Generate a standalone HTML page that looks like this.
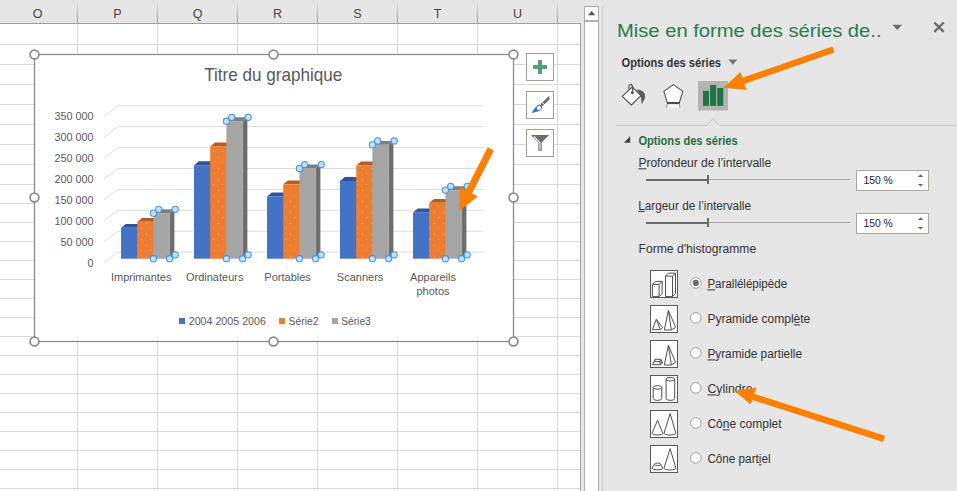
<!DOCTYPE html>
<html><head><meta charset="utf-8"><style>
html,body{margin:0;padding:0;width:957px;height:491px;overflow:hidden;background:#e6e6e6;}
svg{display:block;}
text{font-family:"Liberation Sans",sans-serif;}
</style></head><body>
<svg width="957" height="491" viewBox="0 0 957 491">
<defs>
<linearGradient id="hsep" x1="0" y1="0" x2="0" y2="1"><stop offset="0" stop-color="#d0d0d0"/><stop offset="1" stop-color="#9a9a9a"/></linearGradient>
<pattern id="dots" width="9" height="11" patternUnits="userSpaceOnUse"><rect x="2" y="3" width="1" height="1" fill="#f5a56a"/><rect x="6" y="8" width="1" height="1" fill="#f5a56a"/></pattern>
</defs>
<rect x="0" y="0" width="957" height="491" fill="#e6e6e6" />
<rect x="0" y="0" width="581" height="23" fill="#e6e6e6" />
<rect x="0" y="24" width="580" height="467" fill="#ffffff" />
<rect x="77" y="24" width="1" height="467" fill="#d9d9d9" />
<rect x="77" y="4" width="1" height="19" fill="url(#hsep)"/>
<rect x="157" y="24" width="1" height="467" fill="#d9d9d9" />
<rect x="157" y="4" width="1" height="19" fill="url(#hsep)"/>
<rect x="237" y="24" width="1" height="467" fill="#d9d9d9" />
<rect x="237" y="4" width="1" height="19" fill="url(#hsep)"/>
<rect x="317" y="24" width="1" height="467" fill="#d9d9d9" />
<rect x="317" y="4" width="1" height="19" fill="url(#hsep)"/>
<rect x="397" y="24" width="1" height="467" fill="#d9d9d9" />
<rect x="397" y="4" width="1" height="19" fill="url(#hsep)"/>
<rect x="477" y="24" width="1" height="467" fill="#d9d9d9" />
<rect x="477" y="4" width="1" height="19" fill="url(#hsep)"/>
<rect x="557" y="24" width="1" height="467" fill="#d9d9d9" />
<rect x="557" y="4" width="1" height="19" fill="url(#hsep)"/>
<rect x="0" y="44" width="580" height="1" fill="#d9d9d9" />
<rect x="0" y="64" width="580" height="1" fill="#d9d9d9" />
<rect x="0" y="84" width="580" height="1" fill="#d9d9d9" />
<rect x="0" y="104" width="580" height="1" fill="#d9d9d9" />
<rect x="0" y="124" width="580" height="1" fill="#d9d9d9" />
<rect x="0" y="144" width="580" height="1" fill="#d9d9d9" />
<rect x="0" y="164" width="580" height="1" fill="#d9d9d9" />
<rect x="0" y="184" width="580" height="1" fill="#d9d9d9" />
<rect x="0" y="203" width="580" height="1" fill="#d9d9d9" />
<rect x="0" y="222" width="580" height="1" fill="#d9d9d9" />
<rect x="0" y="241" width="580" height="1" fill="#d9d9d9" />
<rect x="0" y="260" width="580" height="1" fill="#d9d9d9" />
<rect x="0" y="279" width="580" height="1" fill="#d9d9d9" />
<rect x="0" y="298" width="580" height="1" fill="#d9d9d9" />
<rect x="0" y="317" width="580" height="1" fill="#d9d9d9" />
<rect x="0" y="336" width="580" height="1" fill="#d9d9d9" />
<rect x="0" y="355" width="580" height="1" fill="#d9d9d9" />
<rect x="0" y="374" width="580" height="1" fill="#d9d9d9" />
<rect x="0" y="393" width="580" height="1" fill="#d9d9d9" />
<rect x="0" y="412" width="580" height="1" fill="#d9d9d9" />
<rect x="0" y="431" width="580" height="1" fill="#d9d9d9" />
<rect x="0" y="450" width="580" height="1" fill="#d9d9d9" />
<rect x="0" y="469" width="580" height="1" fill="#d9d9d9" />
<rect x="0" y="488" width="580" height="1" fill="#d9d9d9" />
<rect x="0" y="23" width="581" height="1" fill="#a0a0a0" />
<rect x="580" y="23" width="1" height="468" fill="#a6a6a6" />
<text x="37.5" y="18" font-size="12.5" fill="#444444" text-anchor="middle" font-weight="normal" >O</text>
<text x="117.5" y="18" font-size="12.5" fill="#444444" text-anchor="middle" font-weight="normal" >P</text>
<text x="197.5" y="18" font-size="12.5" fill="#444444" text-anchor="middle" font-weight="normal" >Q</text>
<text x="277.5" y="18" font-size="12.5" fill="#444444" text-anchor="middle" font-weight="normal" >R</text>
<text x="357.5" y="18" font-size="12.5" fill="#444444" text-anchor="middle" font-weight="normal" >S</text>
<text x="437.5" y="18" font-size="12.5" fill="#444444" text-anchor="middle" font-weight="normal" >T</text>
<text x="517.5" y="18" font-size="12.5" fill="#444444" text-anchor="middle" font-weight="normal" >U</text>
<rect x="584" y="6" width="15" height="485" fill="#ababab" />
<rect x="585" y="7" width="13" height="484" fill="#ffffff" />
<rect x="585" y="20" width="13" height="2" fill="#b0b0b0" />
<polygon points="588.00,15.20 595.20,15.20 591.60,11.00" fill="#555555" />
<rect x="602" y="6" width="1" height="485" fill="#cfcfcf" />
<rect x="34.5" y="54.5" width="479" height="287" fill="#ffffff" stroke="#8c8c8c" stroke-width="1.3"/>
<text x="204.2" y="81" font-size="17.8" fill="#595959" text-anchor="start" font-weight="normal" textLength="138" lengthAdjust="spacingAndGlyphs" >Titre du graphique</text>
<path d="M104,116.40 L118,105.80 L483.5,105.80" fill="none" stroke="#dcdcdc" stroke-width="1"/>
<text x="93.5" y="120.2" font-size="10.8" fill="#595959" text-anchor="end" font-weight="normal" >350 000</text>
<path d="M104,137.30 L118,126.70 L483.5,126.70" fill="none" stroke="#dcdcdc" stroke-width="1"/>
<text x="93.5" y="141.1" font-size="10.8" fill="#595959" text-anchor="end" font-weight="normal" >300 000</text>
<path d="M104,158.20 L118,147.60 L483.5,147.60" fill="none" stroke="#dcdcdc" stroke-width="1"/>
<text x="93.5" y="162.0" font-size="10.8" fill="#595959" text-anchor="end" font-weight="normal" >250 000</text>
<path d="M104,179.10 L118,168.50 L483.5,168.50" fill="none" stroke="#dcdcdc" stroke-width="1"/>
<text x="93.5" y="182.9" font-size="10.8" fill="#595959" text-anchor="end" font-weight="normal" >200 000</text>
<path d="M104,200.00 L118,189.40 L483.5,189.40" fill="none" stroke="#dcdcdc" stroke-width="1"/>
<text x="93.5" y="203.79999999999998" font-size="10.8" fill="#595959" text-anchor="end" font-weight="normal" >150 000</text>
<path d="M104,220.90 L118,210.30 L483.5,210.30" fill="none" stroke="#dcdcdc" stroke-width="1"/>
<text x="93.5" y="224.70000000000002" font-size="10.8" fill="#595959" text-anchor="end" font-weight="normal" >100 000</text>
<path d="M104,241.80 L118,231.20 L483.5,231.20" fill="none" stroke="#dcdcdc" stroke-width="1"/>
<text x="93.5" y="245.6" font-size="10.8" fill="#595959" text-anchor="end" font-weight="normal" >50 000</text>
<path d="M104,262.70 L118,252.10 L483.5,252.10" fill="none" stroke="#dcdcdc" stroke-width="1"/>
<text x="93.5" y="266.49999999999994" font-size="10.8" fill="#595959" text-anchor="end" font-weight="normal" >0</text>
<polygon points="121.00,227.80 125.80,223.90 142.00,223.90 137.20,227.80" fill="#2f5597" />
<polygon points="137.20,227.80 142.00,223.90 142.00,254.80 137.20,258.70" fill="#2f5597" />
<rect x="121.00" y="227.80" width="16.20" height="30.90" fill="#4472c4" />
<polygon points="137.20,221.80 142.00,217.90 158.20,217.90 153.40,221.80" fill="#b85d1f" />
<polygon points="153.40,221.80 158.20,217.90 158.20,254.80 153.40,258.70" fill="#ae5a23" />
<rect x="137.20" y="221.80" width="16.20" height="36.90" fill="#ed7d31" />
<rect x="137.20" y="221.80" width="16.20" height="36.90" fill="url(#dots)"/>
<polygon points="153.40,213.20 158.20,209.30 174.40,209.30 169.60,213.20" fill="#7f7f7f" />
<polygon points="169.60,213.20 174.40,209.30 174.40,254.80 169.60,258.70" fill="#6e6e6e" />
<rect x="153.40" y="213.20" width="16.20" height="45.50" fill="#a5a5a5" />
<polygon points="194.00,165.20 198.80,161.30 215.00,161.30 210.20,165.20" fill="#2f5597" />
<polygon points="210.20,165.20 215.00,161.30 215.00,254.80 210.20,258.70" fill="#2f5597" />
<rect x="194.00" y="165.20" width="16.20" height="93.50" fill="#4472c4" />
<polygon points="210.20,146.40 215.00,142.50 231.20,142.50 226.40,146.40" fill="#b85d1f" />
<polygon points="226.40,146.40 231.20,142.50 231.20,254.80 226.40,258.70" fill="#ae5a23" />
<rect x="210.20" y="146.40" width="16.20" height="112.30" fill="#ed7d31" />
<rect x="210.20" y="146.40" width="16.20" height="112.30" fill="url(#dots)"/>
<polygon points="226.40,121.20 231.20,117.30 247.40,117.30 242.60,121.20" fill="#7f7f7f" />
<polygon points="242.60,121.20 247.40,117.30 247.40,254.80 242.60,258.70" fill="#6e6e6e" />
<rect x="226.40" y="121.20" width="16.20" height="137.50" fill="#a5a5a5" />
<polygon points="267.00,196.50 271.80,192.60 288.00,192.60 283.20,196.50" fill="#2f5597" />
<polygon points="283.20,196.50 288.00,192.60 288.00,254.80 283.20,258.70" fill="#2f5597" />
<rect x="267.00" y="196.50" width="16.20" height="62.20" fill="#4472c4" />
<polygon points="283.20,184.30 288.00,180.40 304.20,180.40 299.40,184.30" fill="#b85d1f" />
<polygon points="299.40,184.30 304.20,180.40 304.20,254.80 299.40,258.70" fill="#ae5a23" />
<rect x="283.20" y="184.30" width="16.20" height="74.40" fill="#ed7d31" />
<rect x="283.20" y="184.30" width="16.20" height="74.40" fill="url(#dots)"/>
<polygon points="299.40,168.40 304.20,164.50 320.40,164.50 315.60,168.40" fill="#7f7f7f" />
<polygon points="315.60,168.40 320.40,164.50 320.40,254.80 315.60,258.70" fill="#6e6e6e" />
<rect x="299.40" y="168.40" width="16.20" height="90.30" fill="#a5a5a5" />
<polygon points="340.00,181.00 344.80,177.10 361.00,177.10 356.20,181.00" fill="#2f5597" />
<polygon points="356.20,181.00 361.00,177.10 361.00,254.80 356.20,258.70" fill="#2f5597" />
<rect x="340.00" y="181.00" width="16.20" height="77.70" fill="#4472c4" />
<polygon points="356.20,165.50 361.00,161.60 377.20,161.60 372.40,165.50" fill="#b85d1f" />
<polygon points="372.40,165.50 377.20,161.60 377.20,254.80 372.40,258.70" fill="#ae5a23" />
<rect x="356.20" y="165.50" width="16.20" height="93.20" fill="#ed7d31" />
<rect x="356.20" y="165.50" width="16.20" height="93.20" fill="url(#dots)"/>
<polygon points="372.40,144.80 377.20,140.90 393.40,140.90 388.60,144.80" fill="#7f7f7f" />
<polygon points="388.60,144.80 393.40,140.90 393.40,254.80 388.60,258.70" fill="#6e6e6e" />
<rect x="372.40" y="144.80" width="16.20" height="113.90" fill="#a5a5a5" />
<polygon points="413.00,212.40 417.80,208.50 434.00,208.50 429.20,212.40" fill="#2f5597" />
<polygon points="429.20,212.40 434.00,208.50 434.00,254.80 429.20,258.70" fill="#2f5597" />
<rect x="413.00" y="212.40" width="16.20" height="46.30" fill="#4472c4" />
<polygon points="429.20,202.80 434.00,198.90 450.20,198.90 445.40,202.80" fill="#b85d1f" />
<polygon points="445.40,202.80 450.20,198.90 450.20,254.80 445.40,258.70" fill="#ae5a23" />
<rect x="429.20" y="202.80" width="16.20" height="55.90" fill="#ed7d31" />
<rect x="429.20" y="202.80" width="16.20" height="55.90" fill="url(#dots)"/>
<polygon points="445.40,190.20 450.20,186.30 466.40,186.30 461.60,190.20" fill="#7f7f7f" />
<polygon points="461.60,190.20 466.40,186.30 466.40,254.80 461.60,258.70" fill="#6e6e6e" />
<rect x="445.40" y="190.20" width="16.20" height="68.50" fill="#a5a5a5" />
<circle cx="153.40" cy="213.20" r="3.1" fill="#c2def8" stroke="#4196e6" stroke-width="1.05"/>
<circle cx="158.70" cy="209.30" r="3.1" fill="#c2def8" stroke="#4196e6" stroke-width="1.05"/>
<circle cx="175.20" cy="209.30" r="3.1" fill="#c2def8" stroke="#4196e6" stroke-width="1.05"/>
<circle cx="153.40" cy="258.70" r="3.1" fill="#c2def8" stroke="#4196e6" stroke-width="1.05"/>
<circle cx="169.60" cy="258.70" r="3.1" fill="#c2def8" stroke="#4196e6" stroke-width="1.05"/>
<circle cx="175.20" cy="254.80" r="3.1" fill="#c2def8" stroke="#4196e6" stroke-width="1.05"/>
<circle cx="226.40" cy="121.20" r="3.1" fill="#c2def8" stroke="#4196e6" stroke-width="1.05"/>
<circle cx="231.70" cy="117.30" r="3.1" fill="#c2def8" stroke="#4196e6" stroke-width="1.05"/>
<circle cx="248.20" cy="117.30" r="3.1" fill="#c2def8" stroke="#4196e6" stroke-width="1.05"/>
<circle cx="226.40" cy="258.70" r="3.1" fill="#c2def8" stroke="#4196e6" stroke-width="1.05"/>
<circle cx="242.60" cy="258.70" r="3.1" fill="#c2def8" stroke="#4196e6" stroke-width="1.05"/>
<circle cx="248.20" cy="254.80" r="3.1" fill="#c2def8" stroke="#4196e6" stroke-width="1.05"/>
<circle cx="299.40" cy="168.40" r="3.1" fill="#c2def8" stroke="#4196e6" stroke-width="1.05"/>
<circle cx="304.70" cy="164.50" r="3.1" fill="#c2def8" stroke="#4196e6" stroke-width="1.05"/>
<circle cx="321.20" cy="164.50" r="3.1" fill="#c2def8" stroke="#4196e6" stroke-width="1.05"/>
<circle cx="299.40" cy="258.70" r="3.1" fill="#c2def8" stroke="#4196e6" stroke-width="1.05"/>
<circle cx="315.60" cy="258.70" r="3.1" fill="#c2def8" stroke="#4196e6" stroke-width="1.05"/>
<circle cx="321.20" cy="254.80" r="3.1" fill="#c2def8" stroke="#4196e6" stroke-width="1.05"/>
<circle cx="372.40" cy="144.80" r="3.1" fill="#c2def8" stroke="#4196e6" stroke-width="1.05"/>
<circle cx="377.70" cy="140.90" r="3.1" fill="#c2def8" stroke="#4196e6" stroke-width="1.05"/>
<circle cx="394.20" cy="140.90" r="3.1" fill="#c2def8" stroke="#4196e6" stroke-width="1.05"/>
<circle cx="372.40" cy="258.70" r="3.1" fill="#c2def8" stroke="#4196e6" stroke-width="1.05"/>
<circle cx="388.60" cy="258.70" r="3.1" fill="#c2def8" stroke="#4196e6" stroke-width="1.05"/>
<circle cx="394.20" cy="254.80" r="3.1" fill="#c2def8" stroke="#4196e6" stroke-width="1.05"/>
<circle cx="445.40" cy="190.20" r="3.1" fill="#c2def8" stroke="#4196e6" stroke-width="1.05"/>
<circle cx="450.70" cy="186.30" r="3.1" fill="#c2def8" stroke="#4196e6" stroke-width="1.05"/>
<circle cx="467.20" cy="186.30" r="3.1" fill="#c2def8" stroke="#4196e6" stroke-width="1.05"/>
<circle cx="445.40" cy="258.70" r="3.1" fill="#c2def8" stroke="#4196e6" stroke-width="1.05"/>
<circle cx="461.60" cy="258.70" r="3.1" fill="#c2def8" stroke="#4196e6" stroke-width="1.05"/>
<circle cx="467.20" cy="254.80" r="3.1" fill="#c2def8" stroke="#4196e6" stroke-width="1.05"/>
<text x="141.2" y="280.8" font-size="11" fill="#595959" text-anchor="middle" font-weight="normal" >Imprimantes</text>
<text x="214.7" y="280.8" font-size="11" fill="#595959" text-anchor="middle" font-weight="normal" >Ordinateurs</text>
<text x="287.6" y="280.8" font-size="11" fill="#595959" text-anchor="middle" font-weight="normal" >Portables</text>
<text x="360.1" y="280.8" font-size="11" fill="#595959" text-anchor="middle" font-weight="normal" >Scanners</text>
<text x="433" y="280.8" font-size="11" fill="#595959" text-anchor="middle" font-weight="normal" >Appareils</text>
<text x="433" y="294.9" font-size="11" fill="#595959" text-anchor="middle" font-weight="normal" >photos</text>
<rect x="179" y="318" width="6" height="6" fill="#4472c4" />
<text x="188.7" y="324.7" font-size="10.8" fill="#595959" text-anchor="start" font-weight="normal" textLength="77.2" lengthAdjust="spacingAndGlyphs" >2004 2005 2006</text>
<rect x="279" y="318" width="6" height="6" fill="#ed7d31" />
<text x="288.5" y="324.7" font-size="10.8" fill="#595959" text-anchor="start" font-weight="normal" textLength="30.1" lengthAdjust="spacingAndGlyphs" >Série2</text>
<rect x="332" y="318" width="6" height="6" fill="#a5a5a5" />
<text x="341.2" y="324.7" font-size="10.8" fill="#595959" text-anchor="start" font-weight="normal" textLength="29.6" lengthAdjust="spacingAndGlyphs" >Série3</text>
<circle cx="34.5" cy="54.5" r="4.4" fill="#ffffff" stroke="#8c8c8c" stroke-width="1.7"/>
<circle cx="273.5" cy="54.5" r="4.4" fill="#ffffff" stroke="#8c8c8c" stroke-width="1.7"/>
<circle cx="513.5" cy="54.5" r="4.4" fill="#ffffff" stroke="#8c8c8c" stroke-width="1.7"/>
<circle cx="34.5" cy="197.5" r="4.4" fill="#ffffff" stroke="#8c8c8c" stroke-width="1.7"/>
<circle cx="513.5" cy="197.5" r="4.4" fill="#ffffff" stroke="#8c8c8c" stroke-width="1.7"/>
<circle cx="34.5" cy="341.5" r="4.4" fill="#ffffff" stroke="#8c8c8c" stroke-width="1.7"/>
<circle cx="273.5" cy="341.5" r="4.4" fill="#ffffff" stroke="#8c8c8c" stroke-width="1.7"/>
<circle cx="513.5" cy="341.5" r="4.4" fill="#ffffff" stroke="#8c8c8c" stroke-width="1.7"/>
<rect x="526.5" y="53.5" width="27" height="27" fill="#ffffff" stroke="#a39e96" stroke-width="1"/>
<rect x="526.5" y="91.5" width="27" height="27" fill="#ffffff" stroke="#a39e96" stroke-width="1"/>
<rect x="526.5" y="129.5" width="27" height="27" fill="#ffffff" stroke="#a39e96" stroke-width="1"/>
<rect x="533" y="65" width="14" height="4" fill="#56a07e" />
<rect x="538" y="60" width="4" height="14" fill="#56a07e" />
<polygon points="549.30,95.80 549.50,99.60 544.60,104.20 542.50,102.20" fill="#6a6a6a" />
<polygon points="541.90,102.80 543.90,104.80 542.50,106.20 540.50,104.20" fill="#5a5a5a" />
<path d="M540.2,104.6 C543.2,106.3 542.8,110 539,111 C536.5,111.8 534,112.6 531.5,112.9 C533.3,110.2 535,107.4 536.9,105.7 C537.9,104.6 539.1,104.1 540.2,104.6 Z" fill="#3f74c8"/>
<path d="M540,105.9 C541.7,107 541.5,109.5 538.9,110 C536.9,110.2 536.3,107.9 537.3,106.7 C538.1,105.9 539,105.6 540,105.9 Z" fill="#ffffff"/>
<polygon points="531.00,135.00 549.20,135.00 541.70,142.40 541.70,150.70 538.30,150.70 538.30,142.40" fill="#6d6d6d" />
<path d="M534,136.4 L539.9,142.6 L539.9,149.8" fill="none" stroke="#ffffff" stroke-width="1.1"/>
<text x="617" y="36.9" font-size="19" fill="#2a7a50" text-anchor="start" font-weight="normal" textLength="264.5" lengthAdjust="spacingAndGlyphs" >Mise en forme des séries de..</text>
<polygon points="892.60,24.80 902.00,24.80 897.30,30.00" fill="#6a6a6a" />
<path d="M934.3,22.5 L943.7,31.9 M943.7,22.5 L934.3,31.9" stroke="#6a6a6a" stroke-width="2.4"/>
<text x="621.5" y="66.6" font-size="12" fill="#333333" text-anchor="start" font-weight="bold" textLength="99.5" lengthAdjust="spacingAndGlyphs" >Options des séries</text>
<polygon points="728.40,59.50 737.30,59.50 732.85,64.70" fill="#737373" />
<polygon points="622.20,96.40 632.20,87.00 641.00,95.60 631.40,105.00" fill="#ffffff" stroke="#505050" stroke-width="1.1" stroke-linejoin="round"/>
<path d="M628.8,89.2 L628.8,86.2 Q630.7,82.6 632.6,86.2 L632.6,92" fill="none" stroke="#505050" stroke-width="1.1"/>
<circle cx="632.4" cy="92.6" r="1.5" fill="#505050"/>
<path d="M636.8,89.6 C641.5,89.6 645.6,92.4 645.1,97 C644.8,100 642.6,102.2 641.6,104.6 C641.2,101.2 641.6,98.2 640.4,95.8 Z" fill="#5a5a5a"/>
<polygon points="673.30,84.60 682.80,91.40 679.30,102.80 667.30,102.80 663.90,91.40" fill="#ffffff" stroke="#505050" stroke-width="1.1" stroke-linejoin="round"/>
<rect x="667" y="102" width="12.6" height="2.2" fill="#4a4a4a" />
<rect x="667" y="104.2" width="12.6" height="3.5" fill="#f4f4f4" />
<path d="M667.3,104 L666.6,108 M679.3,104 L680,108" stroke="#9a9a9a" stroke-width="1"/>
<rect x="698" y="81" width="30" height="29.5" fill="#b3b3b3" />
<rect x="703" y="90.8" width="6" height="15" fill="#217346" />
<rect x="710.1" y="85" width="6" height="20.8" fill="#217346" />
<rect x="717.2" y="88" width="6.1" height="17.8" fill="#217346" />
<path d="M616,125.5 L706.5,125.5 L713,118.5 L719.5,125.5 L957,125.5" fill="none" stroke="#c6c6c6" stroke-width="1"/>
<polygon points="630.20,136.30 630.20,142.70 623.80,142.70" fill="#404040" />
<text x="638.4" y="144.7" font-size="12" fill="#1f6e43" text-anchor="start" font-weight="bold" textLength="99.3" lengthAdjust="spacingAndGlyphs" >Options des séries</text>
<text x="638.4" y="167.3" font-size="12.3" fill="#333333" text-anchor="start" font-weight="normal" textLength="132.7" lengthAdjust="spacingAndGlyphs" >Profondeur de l’intervalle</text>
<rect x="638.40" y="168.30" width="8.00" height="1" fill="#333333" />
<rect x="646" y="179" width="62" height="2" fill="#6a6a6a" />
<rect x="707" y="175" width="2" height="9" fill="#6a6a6a" />
<rect x="709" y="179" width="141" height="1" fill="#a8a8a8" />
<rect x="856.5" y="170.5" width="72" height="20" fill="#ffffff" stroke="#aba69e"/>
<text x="863.5" y="183.7" font-size="11.8" fill="#262626" text-anchor="start" font-weight="normal" textLength="29.3" lengthAdjust="spacingAndGlyphs" >150 %</text>
<polygon points="917.80,176.90 923.30,176.90 920.55,174.30" fill="#6a6a6a" />
<polygon points="917.80,183.90 923.30,183.90 920.55,186.60" fill="#6a6a6a" />
<text x="638.2" y="209.9" font-size="12.3" fill="#333333" text-anchor="start" font-weight="normal" textLength="112.8" lengthAdjust="spacingAndGlyphs" >Largeur de l’intervalle</text>
<rect x="638.20" y="210.90" width="6.56" height="1" fill="#333333" />
<rect x="646" y="222" width="62" height="2" fill="#6a6a6a" />
<rect x="707" y="218" width="2" height="9" fill="#6a6a6a" />
<rect x="709" y="222" width="141" height="1" fill="#a8a8a8" />
<rect x="856.5" y="213.5" width="72" height="20" fill="#ffffff" stroke="#aba69e"/>
<text x="863.5" y="226.7" font-size="11.8" fill="#262626" text-anchor="start" font-weight="normal" textLength="29.3" lengthAdjust="spacingAndGlyphs" >150 %</text>
<polygon points="917.80,219.90 923.30,219.90 920.55,217.30" fill="#6a6a6a" />
<polygon points="917.80,226.90 923.30,226.90 920.55,229.60" fill="#6a6a6a" />
<text x="638.5" y="253" font-size="12.3" fill="#333333" text-anchor="start" font-weight="normal" textLength="117.7" lengthAdjust="spacingAndGlyphs" >Forme d'histogramme</text>
<rect x="650.5" y="270.5" width="27" height="27" fill="#ffffff" stroke="#595959"/>
<circle cx="695.8" cy="282.9" r="5.3" fill="#ffffff" stroke="#a0a0a0" stroke-width="1"/>
<circle cx="695.8" cy="282.9" r="3.1" fill="#6d6d6d"/>
<text x="707.4" y="288.4" font-size="12.3" fill="#333333" text-anchor="start" font-weight="normal" textLength="79.7" lengthAdjust="spacingAndGlyphs" >Parallélépipède</text>
<rect x="707.40" y="289.40" width="7.71" height="1" fill="#333333" />
<rect x="650.5" y="305.5" width="27" height="27" fill="#ffffff" stroke="#595959"/>
<circle cx="695.8" cy="317.9" r="5.3" fill="#ffffff" stroke="#a0a0a0" stroke-width="1"/>
<text x="707.4" y="323.4" font-size="12.3" fill="#333333" text-anchor="start" font-weight="normal" textLength="102.9" lengthAdjust="spacingAndGlyphs" >Pyramide complète</text>
<rect x="793.59" y="324.40" width="6.69" height="1" fill="#333333" />
<rect x="650.5" y="340.5" width="27" height="27" fill="#ffffff" stroke="#595959"/>
<circle cx="695.8" cy="352.9" r="5.3" fill="#ffffff" stroke="#a0a0a0" stroke-width="1"/>
<text x="707.4" y="358.4" font-size="12.3" fill="#333333" text-anchor="start" font-weight="normal" textLength="94.6" lengthAdjust="spacingAndGlyphs" >Pyramide partielle</text>
<rect x="707.40" y="359.40" width="7.88" height="1" fill="#333333" />
<rect x="650.5" y="375.5" width="27" height="27" fill="#ffffff" stroke="#595959"/>
<circle cx="695.8" cy="387.9" r="5.3" fill="#ffffff" stroke="#a0a0a0" stroke-width="1"/>
<text x="707.4" y="393.4" font-size="12.3" fill="#333333" text-anchor="start" font-weight="normal" >Cylindre</text>
<rect x="707.40" y="394.40" width="8.88" height="1" fill="#333333" />
<rect x="650.5" y="410.5" width="27" height="27" fill="#ffffff" stroke="#595959"/>
<circle cx="695.8" cy="422.9" r="5.3" fill="#ffffff" stroke="#a0a0a0" stroke-width="1"/>
<text x="707.4" y="428.4" font-size="12.3" fill="#333333" text-anchor="start" font-weight="normal" textLength="74.2" lengthAdjust="spacingAndGlyphs" >Cône complet</text>
<rect x="722.77" y="429.40" width="6.69" height="1" fill="#333333" />
<rect x="650.5" y="445.5" width="27" height="27" fill="#ffffff" stroke="#595959"/>
<circle cx="695.8" cy="457.9" r="5.3" fill="#ffffff" stroke="#a0a0a0" stroke-width="1"/>
<text x="707.4" y="463.4" font-size="12.3" fill="#333333" text-anchor="start" font-weight="normal" textLength="63.1" lengthAdjust="spacingAndGlyphs" >Cône partiel</text>
<rect x="758.79" y="464.40" width="2.60" height="1" fill="#333333" />
<path d="M652.4,284.4 L655.4,281.4 L662.1,281.4 L662.1,293.6 L659.1,296.6 L652.4,296.6 Z M652.4,284.4 L659.1,284.4 L662.1,281.4 M659.1,284.4 L659.1,296.6" fill="#ffffff" stroke="#505050" stroke-width="1" stroke-linejoin="round"/>
<path d="M665.5,276.1 L668.5,273.1 L675.5,273.1 L675.5,293.6 L672.5,296.6 L665.5,296.6 Z M665.5,276.1 L672.5,276.1 L675.5,273.1 M672.5,276.1 L672.5,296.6" fill="#ffffff" stroke="#505050" stroke-width="1" stroke-linejoin="round"/>
<path d="M656.3,319.3 L652.4,329.7 L660.3,329.7 L662.7,327.8 Z M656.3,319.3 L660.3,329.7" fill="#ffffff" stroke="#505050" stroke-width="1" stroke-linejoin="round"/>
<path d="M668.4,310.4 L664.3,330 L671.3,330 L675.6,327.2 Z M668.4,310.4 L671.3,330" fill="#ffffff" stroke="#505050" stroke-width="1" stroke-linejoin="round"/>
<path d="M668.4,345.4 L664.3,365 L671.3,365 L675.6,362.2 Z M668.4,345.4 L671.3,365" fill="#ffffff" stroke="#505050" stroke-width="1" stroke-linejoin="round"/>
<path d="M655.2,359.3 L660.8,359.3 L662.7,362.8 L660.3,364.7 L652.4,364.7 Z M654.4,361.6 L659.8,361.6 L662.7,362.8 M659.8,361.6 L660.3,364.7 M655.2,359.3 L654.4,361.6 M660.8,359.3 L659.8,361.6" fill="#ffffff" stroke="#505050" stroke-width="1" stroke-linejoin="round"/>
<path d="M653.2,387.4 L653.2,398.6 A4.2999999999999545,1.8 0 0 0 661.8,398.6 L661.8,387.4 A4.2999999999999545,1.8 0 0 0 653.2,387.4 A4.2999999999999545,1.8 0 0 0 661.8,387.4" fill="#ffffff" stroke="#505050" stroke-width="1" stroke-linejoin="round"/>
<path d="M666.1,379.2 L666.1,398.6 A4.300000000000011,1.8 0 0 0 674.7,398.6 L674.7,379.2 A4.300000000000011,1.8 0 0 0 666.1,379.2 A4.300000000000011,1.8 0 0 0 674.7,379.2" fill="#ffffff" stroke="#505050" stroke-width="1" stroke-linejoin="round"/>
<path d="M657.6,420.3 L652,433.2 A5.350000000000023,1.8 0 0 0 662.7,433.2 Z" fill="#ffffff" stroke="#505050" stroke-width="1" stroke-linejoin="round"/>
<path d="M670.1,413.6 L664,433.2 A5.949999999999989,1.8 0 0 0 675.9,433.2 Z" fill="#ffffff" stroke="#505050" stroke-width="1" stroke-linejoin="round"/>
<path d="M670.1,448.6 L664,468.2 A5.949999999999989,1.8 0 0 0 675.9,468.2 Z" fill="#ffffff" stroke="#505050" stroke-width="1" stroke-linejoin="round"/>
<path d="M654.4,464.3 L652,468 A5.35,1.9 0 0 0 662.7,468 L660.7,464.3 A3.15,1.3 0 0 0 654.4,464.3 A3.15,1.3 0 0 0 660.7,464.3" fill="#ffffff" stroke="#505050" stroke-width="1" stroke-linejoin="round"/>
<polygon points="487.68,147.30 465.72,190.20 460.30,187.30 459.00,211.00 477.80,196.50 471.95,193.39 493.92,150.50" fill="#ff8000" />
<polygon points="832.33,46.43 742.34,77.76 740.40,71.90 723.40,87.80 746.50,90.00 744.48,83.90 834.47,52.57" fill="#ff8000" />
<polygon points="885.00,435.81 754.19,393.72 756.70,387.50 734.20,390.70 750.30,404.20 752.20,399.90 883.00,441.99" fill="#ff8000" />
</svg>
</body></html>
